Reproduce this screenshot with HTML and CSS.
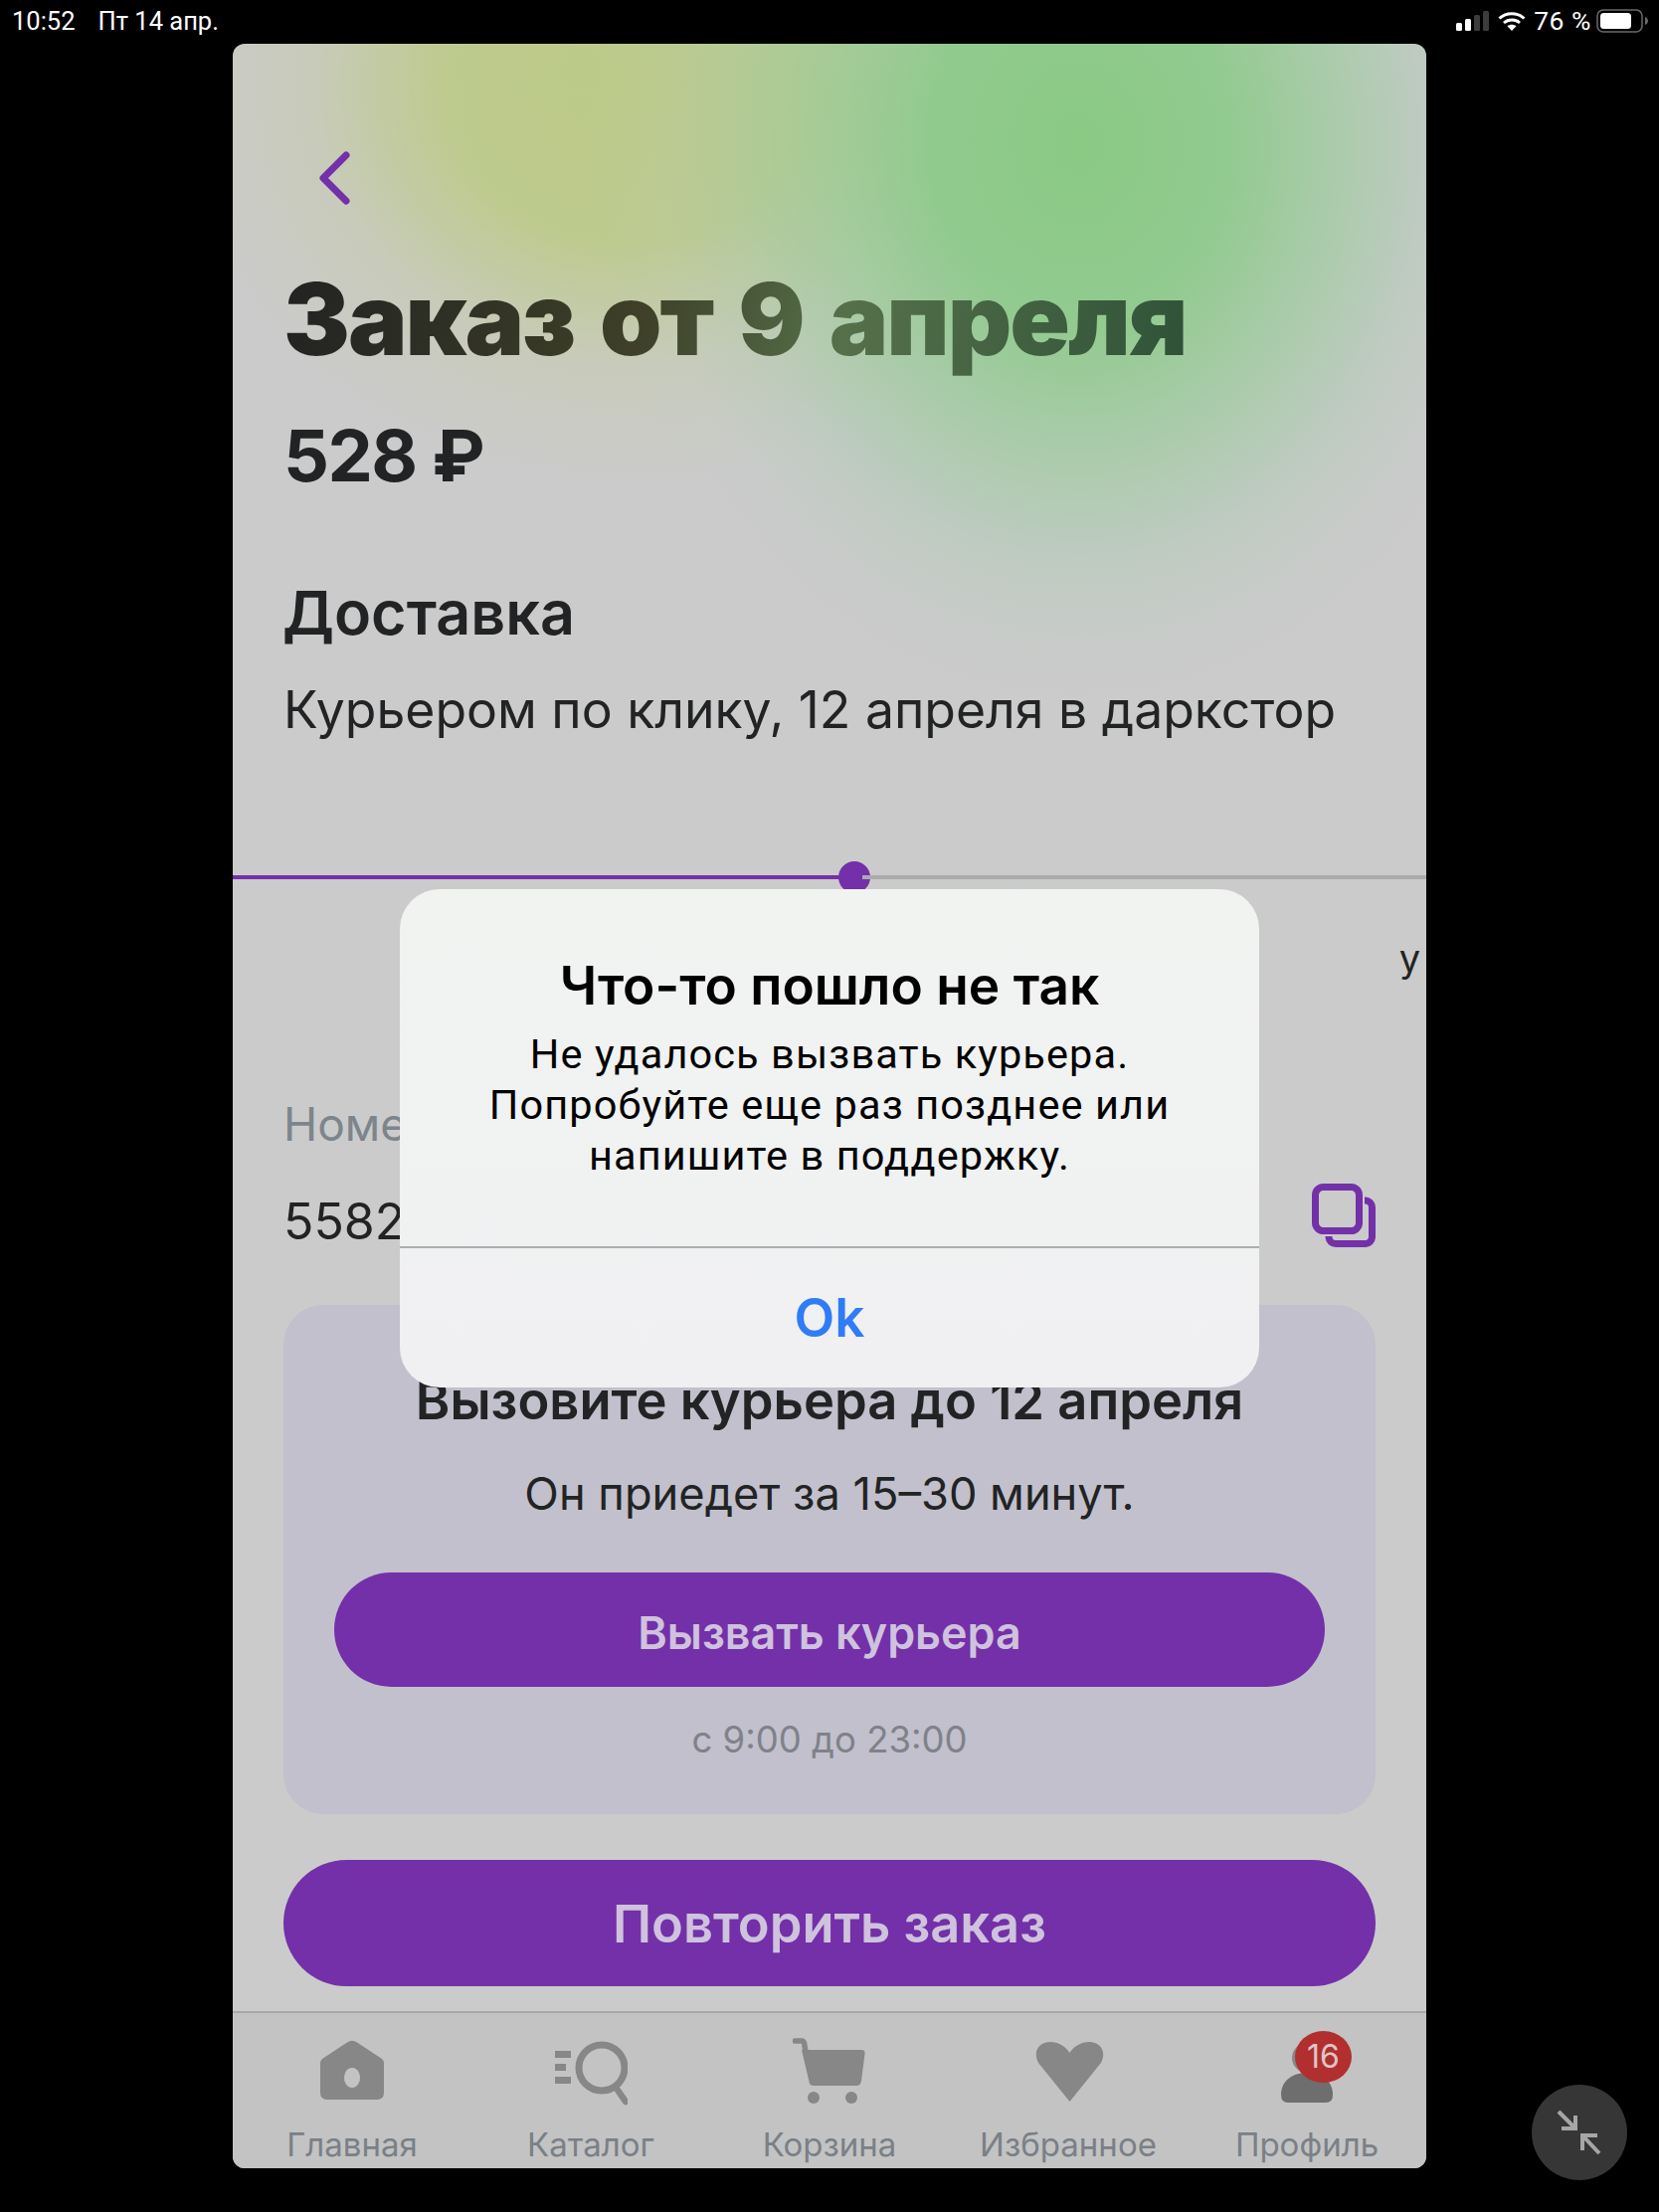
FILE: index.html
```html
<!DOCTYPE html>
<html lang="ru">
<head>
<meta charset="utf-8">
<title>Заказ от 9 апреля</title>
<link rel="stylesheet" href="styles.css">
</head>
<body>
<div class="screen">
  <header class="status">
    <div class="status-left"><span>10:52</span><span>Пт 14 апр.</span></div>
    <div class="status-right">
      <svg class="ic-signal" viewBox="0 0 33 20"><rect x="0" y="12" width="6" height="8" rx="1.5" fill="#fff"/><rect x="9" y="8" width="6" height="12" rx="1.5" fill="#fff"/><rect x="18" y="4" width="6" height="16" rx="1.5" fill="#3c3c3c"/><rect x="27" y="0" width="6" height="20" rx="1.5" fill="#3c3c3c"/></svg>
      <svg class="ic-wifi" viewBox="0 0 28 20"><path d="M1.5 7.5C8.5 1 19.5 1 26.5 7.500" fill="none" stroke="#fff" stroke-width="3"/><path d="M6 12c4.500-4 11.500-4 16 0" fill="none" stroke="#fff" stroke-width="3"/><path d="M14 20l-4.500-4.800c2.500-2 6.500-2 9 0z" fill="#fff"/></svg>
      <span class="battery-pct">76 %</span>
      <svg class="ic-battery" viewBox="0 0 52 24"><rect x="1" y="1" width="45" height="22" rx="6" fill="none" stroke="#6a6a6a" stroke-width="1.500"/><rect x="4" y="4" width="31" height="16" rx="3.500" fill="#fff"/><path d="M49 8c2 1 3 2.500 3 4s-1 3-3 4z" fill="#6a6a6a"/></svg>
    </div>
  </header>

  <main class="app">
    <section class="hero">
      <svg class="back" viewBox="0 0 32 54"><path d="M28 4L5 27l23 23" fill="none" stroke="#7330a9" stroke-width="7" stroke-linecap="round" stroke-linejoin="round"/></svg>
      <h1 class="title">Заказ от 9 апреля</h1>
      <div class="price">528 ₽</div>
      <h2 class="section-title">Доставка</h2>
      <p class="section-text">Курьером по клику, 12 апреля в даркстор</p>
    </section>

    <div class="progress"><div class="progress-done"></div><div class="progress-thumb"></div><div class="progress-rest"></div></div>

    <div class="status-note">у</div>

    <div class="order-row">
      <div>
        <div class="order-label">Номер заказа</div>
        <div class="order-number">5582</div>
      </div>
      <svg class="copy" viewBox="0 0 64 64"><rect x="3.500" y="3.500" width="44" height="44" rx="8" fill="none" stroke="#7330a9" stroke-width="7"/><path d="M53 17h1a7 7 0 0 1 6.500 7v30a7 7 0 0 1-6.500 6.500H24a7 7 0 0 1-7-6.500v-1" fill="none" stroke="#7330a9" stroke-width="7"/></svg>
    </div>

    <section class="call-card">
      <h3 class="call-title">Вызовите курьера до 12 апреля</h3>
      <p class="call-text">Он приедет за 15–30 минут.</p>
      <button class="btn btn-call">Вызвать курьера</button>
      <p class="call-hours">с 9:00 до 23:00</p>
    </section>

    <button class="btn btn-repeat">Повторить заказ</button>

    <nav class="tabs">
      <div class="tab">
        <svg class="tab-ic" viewBox="0 0 74 68"><path fill-rule="evenodd" d="M5 25a6 6 0 0 1 2-4L32 4.500q5-3.500 10 0L67 21a6 6 0 0 1 2 4v30q0 7-7 7H12q-7 0-7-7zM37 30a8 10 0 1 0 .01 0z" fill="#878787"/></svg>
        <span>Главная</span>
      </div>
      <div class="tab">
        <svg class="tab-ic" viewBox="0 0 74 68"><circle cx="48" cy="30" r="23" fill="none" stroke="#878787" stroke-width="7"/><path d="M63 51l9 13" stroke="#878787" stroke-width="6.500" stroke-linecap="round"/><path d="M1 13h16v7H1zM1 26h11v7H1zM1 39h16v7H1z" fill="#878787"/></svg>
        <span>Каталог</span>
      </div>
      <div class="tab">
        <svg class="tab-ic" viewBox="0 0 74 68"><path d="M2 3h7c1.500 0 2 .5 2.500 2L14 20" fill="none" stroke="#878787" stroke-width="5.500" stroke-linecap="round"/><path d="M9 12h60q4 0 3.500 4L69 43q-.5 5-5 5H21q-4 0-4.500-4z" fill="#878787"/><circle cx="21" cy="60" r="6" fill="#878787"/><circle cx="59" cy="60" r="6" fill="#878787"/></svg>
        <span>Корзина</span>
      </div>
      <div class="tab">
        <svg class="tab-ic" viewBox="0 0 74 68"><path d="M38.500 64L7 25C1 13 8 4 19 4c8 0 15 4 19.500 11C43 8 50 4 58 4c11 0 18 9 12 21z" fill="#878787"/></svg>
        <span>Избранное</span>
      </div>
      <div class="tab">
        <svg class="tab-ic" viewBox="0 0 74 68"><circle cx="37" cy="20" r="15" fill="#878787"/><path d="M11 57c0-15 13-22 26-22s26 7 26 22q0 8-7 8H18q-7 0-7-8z" fill="#6e6e6e"/></svg>
        <span>Профиль</span>
        <b class="badge">16</b>
      </div>
    </nav>

    <div class="alert">
      <div class="alert-body">
        <div class="alert-title">Что-то пошло не так</div>
        <p class="alert-text">Не удалось вызвать курьера.<br>Попробуйте еще раз позднее или<br>напишите в поддержку.</p>
      </div>
      <div class="alert-action">Ok</div>
    </div>
  </main>

  <div class="float-btn">
    <svg viewBox="0 0 48 48"><path d="M3 3l17 17M20 7v13H6" fill="none" stroke="#a6a6a6" stroke-width="4"/><path d="M44 45L27 27M42 27H27v15" fill="none" stroke="#a6a6a6" stroke-width="4"/></svg>
  </div>
</div>
</body>
</html>
```

FILE: styles.css
```css
* { box-sizing: border-box; }
html, body { margin: 0; padding: 0; background: #000; }
body { font-family: Inter, "Noto Sans", sans-serif; }
.screen { position: relative; width: 1668px; height: 2224px; overflow: hidden; background: #000; }

.status { height: 44px; display: flex; justify-content: space-between; align-items: center; padding: 0 11px 3px 12px; color: #fff; font: 25.5px/28px Roboto, sans-serif; }
.status-left { display: flex; gap: 23px; }
.status-right { display: flex; align-items: center; gap: 9px; }
.ic-signal { width: 33px; height: 20px; }
.ic-wifi { width: 28px; height: 20px; }
.battery-pct { font-size: 26.5px; letter-spacing: .5px; margin: 0 -4px 0 -1px; }
.ic-battery { width: 52px; height: 24px; }

.app { position: relative; width: 1200px; height: 2136px; margin-left: 234px; border-radius: 12px; overflow: hidden; display: flex; flex-direction: column; color: #222324; background:
  radial-gradient(ellipse 500px 600px at 850px 100px, rgb(138,202,133) 0%, rgba(141,202,138,.92) 30%, rgba(150,203,150,.65) 50%, rgba(165,203,172,.33) 70%, rgba(185,203,190,.12) 85%, rgba(203,203,203,0) 100%) no-repeat,
  radial-gradient(ellipse 460px 400px at 400px 40px, rgb(188,202,135) 0%, rgba(188,202,135,.9) 40%, rgba(195,203,160,.4) 70%, rgba(203,203,203,0) 100%) no-repeat,
  #cbcbcb; }
.app > * { flex-shrink: 0; }

.hero { height: 560px; padding: 108px 52px 0 51px; }
.back { display: block; width: 32px; height: 54px; margin-left: 35px; }
.title { margin: 55px 0 0; font-size: 100px; line-height: 120px; font-weight: 900; letter-spacing: -2px; word-spacing: 8px; background: linear-gradient(100deg, #222 0%, #3e4028 40%, #55704a 62%, #2f5238 100%); -webkit-background-clip: text; background-clip: text; color: transparent; width: fit-content; }
.price { margin-top: 32px; font-size: 72px; line-height: 90px; font-weight: 700; letter-spacing: -1.5px; }
.section-title { margin: 77px 0 0 -1px; font-size: 61px; line-height: 72px; font-weight: 600; }
.section-text { margin: 30px 0 0; font-size: 51.7px; line-height: 62px; font-weight: 400; }

.progress { display: flex; align-items: center; height: 32px; margin-top: 262px; }
.progress-done { width: 617px; height: 4px; background: #7330a9; }
.progress-thumb { width: 32px; height: 32px; border-radius: 50%; background: #7330a9; margin: 0 -8px; }
.progress-rest { flex: 1; height: 4px; background: #a9abad; }

.status-note { margin-top: 42px; padding-right: 6px; text-align: right; font-size: 38px; line-height: 46px; white-space: nowrap; }

.order-row { display: flex; justify-content: space-between; align-items: flex-end; padding: 0 51px 0 51px; margin-top: 116px; }
.order-label { font-size: 46px; line-height: 56px; color: #7d858c; white-space: nowrap; }
.order-number { margin-top: 40px; font-size: 50px; line-height: 60px; }
.copy { width: 64px; height: 64px; margin-bottom: 4px; }

.call-card { margin: 54px 51px 0; height: 512px; border-radius: 40px; background: #c2c0cc; padding: 66px 51px 0; text-align: center; }
.call-title { margin: 0; font-size: 52.5px; line-height: 60px; font-weight: 600; }
.call-text { margin: 39px 0 0; font-size: 45.2px; line-height: 50px; }
.btn { display: block; border: 0; color: #cfc2dc; background: #7330a9; font-family: inherit; font-weight: 600; text-align: center; }
.btn-call { width: 996px; height: 115px; margin-top: 54px; padding-top: 7px; border-radius: 58px; font-size: 44.8px; }
.call-hours { margin: 31px 0 0; font-size: 36.5px; line-height: 44px; color: #7f828a; }
.btn-repeat { width: 1098px; height: 127px; margin: 46px 51px 0; border-radius: 64px; font-size: 52.4px; }

.tabs { margin-top: 25px; flex: 1; display: grid; grid-template-columns: repeat(5, 240px); border-top: 2px solid #a8a8a8; background: #c3c3c3; }
.tab { position: relative; display: flex; flex-direction: column; align-items: center; padding-top: 25px; font-size: 33px; line-height: 40px; color: #7a8087; }
.tab-ic { width: 74px; height: 68px; }
.tab span { margin-top: 19px; }
.badge { position: absolute; left: 108px; top: 18px; width: 57px; height: 52px; border-radius: 50%; background: #b22f2f; color: #dcc6c6; font-size: 32px; line-height: 52px; font-weight: 400; text-align: center; }

.alert { position: absolute; left: 168px; top: 850px; width: 864px; height: 501px; border-radius: 40px; background: linear-gradient(180deg, #f1f3f1, #f0f0f2); color: #000; display: flex; flex-direction: column; font-family: Roboto, sans-serif; }
.alert-body { height: 361px; padding-top: 67px; text-align: center; border-bottom: 2px solid #adadad; }
.alert-title { font-size: 53.2px; line-height: 60px; font-weight: 600; font-family: Inter, sans-serif; }
.alert-text { margin: 13px 0 0; font-size: 41.5px; line-height: 51px; letter-spacing: 1.1px; }
.alert-action { flex: 1; display: flex; align-items: center; justify-content: center; color: #2f7cf6; font-size: 53px; font-weight: 600; font-family: Inter, sans-serif; }

.float-btn { position: absolute; left: 1540px; top: 2096px; width: 96px; height: 96px; border-radius: 50%; background: #363636; display: flex; align-items: center; justify-content: center; }
.float-btn svg { width: 48px; height: 48px; }
```
